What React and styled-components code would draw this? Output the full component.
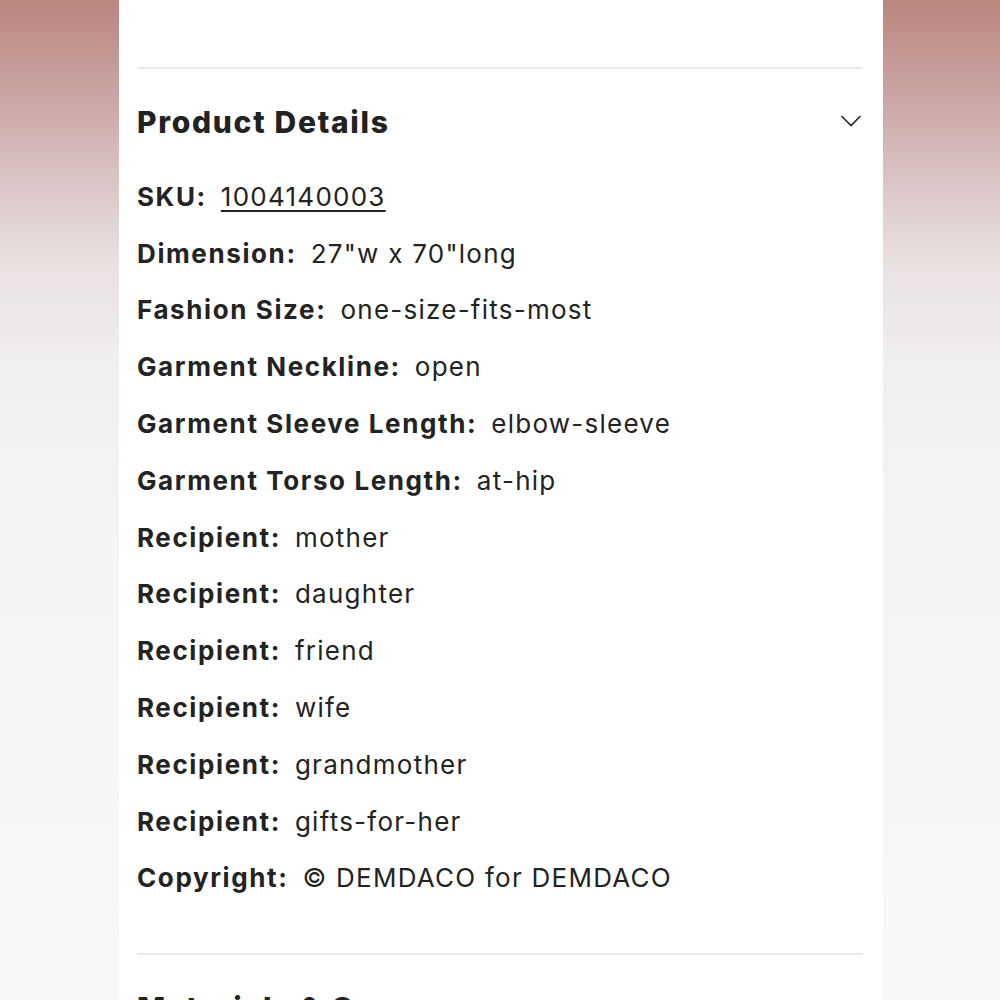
import React from 'react';
import styled, { createGlobalStyle } from 'styled-components';

const GlobalStyle = createGlobalStyle`
  html, body {
    margin: 0;
    padding: 0;
  }
  body {
    font-family: Inter, "Noto Sans", "Liberation Sans", sans-serif;
    -webkit-font-smoothing: antialiased;
  }
`;

const Page = styled.div`
  height: 1000px;
  overflow: hidden;
  display: flex;
  background: linear-gradient(
    to bottom,
    #bb8680 0px,
    #c9a3a1 90px,
    #d8c1c1 170px,
    #e9e0e0 260px,
    #f1eeee 360px,
    #f5f4f4 520px,
    #f8f8f8 1000px
  );
`;

const Panel = styled.main`
  margin-left: 119px;
  width: 764px;
  background: #ffffff;
  padding: 67px 20px 0 18px;
  box-sizing: border-box;
`;

const Divider = styled.hr`
  margin: 0;
  border: none;
  height: 2px;
  background: #e8e8e8;
`;

const SectionHeader = styled.div`
  display: flex;
  align-items: center;
  justify-content: space-between;
  height: 99px;
  padding: 6px 1px 0 0;
  box-sizing: border-box;
`;

const Heading = styled.h2`
  margin: 0;
  font-size: 30px;
  font-weight: 800;
  color: #222222;
  letter-spacing: 1.7px;
  white-space: nowrap;
`;

const Chevron = styled.svg`
  width: 22px;
  height: 14px;
  margin-top: -2px;
`;

const DetailList = styled.div`
  display: flex;
  flex-direction: column;
`;

const Row = styled.div`
  display: flex;
  align-items: center;
  gap: 14px;
  height: 56.8px;
  font-size: 26px;
  color: #232323;
  white-space: nowrap;
`;

const Label = styled.span`
  font-weight: 700;
  letter-spacing: 1.6px;
`;

const Value = styled.span`
  font-weight: 400;
  letter-spacing: 1.25px;
  text-decoration: ${(p) => (p.$link ? 'underline' : 'none')};
  text-decoration-thickness: 2px;
  text-underline-offset: 4px;
`;

const Spacer = styled.div`
  height: 47px;
`;

const details = [
  ['SKU', '1004140003', true],
  ['Dimension', '27"w x 70"long'],
  ['Fashion Size', 'one-size-fits-most'],
  ['Garment Neckline', 'open'],
  ['Garment Sleeve Length', 'elbow-sleeve'],
  ['Garment Torso Length', 'at-hip'],
  ['Recipient', 'mother'],
  ['Recipient', 'daughter'],
  ['Recipient', 'friend'],
  ['Recipient', 'wife'],
  ['Recipient', 'grandmother'],
  ['Recipient', 'gifts-for-her'],
  ['Copyright', '© DEMDACO for DEMDACO'],
];

const App = () => {
  return (
    <Page>
      <GlobalStyle />
      <Panel>
        <Divider />
        <SectionHeader>
          <Heading>Product Details</Heading>
          <Chevron viewBox="0 0 22 14" fill="none">
            <path d="M1.5 2 L11 11.5 L20.5 2" stroke="#2a2a2a" strokeWidth="1.6" />
          </Chevron>
        </SectionHeader>
        <DetailList>
          {details.map(([label, value, link], i) => (
            <Row key={i}>
              <Label>{label}:</Label>
              <Value $link={link}>{value}</Value>
            </Row>
          ))}
        </DetailList>
        <Spacer />
        <Divider />
        <SectionHeader>
          <Heading>Materials &amp; Care</Heading>
          <Chevron viewBox="0 0 22 14" fill="none">
            <path d="M1.5 2 L11 11.5 L20.5 2" stroke="#2a2a2a" strokeWidth="1.6" />
          </Chevron>
        </SectionHeader>
      </Panel>
    </Page>
  );
};

export default App;
